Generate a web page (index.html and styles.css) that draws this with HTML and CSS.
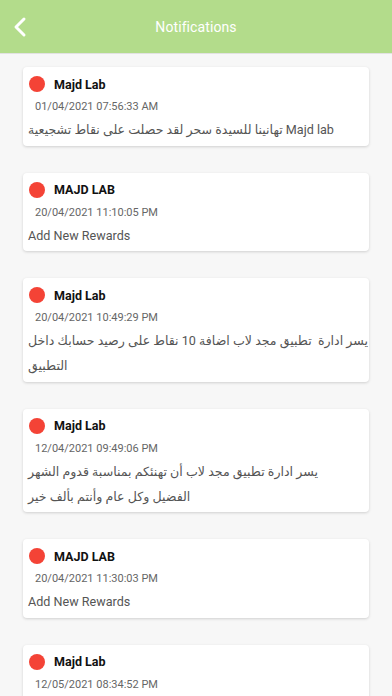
FILE: index.html
```html
<!DOCTYPE html>
<html>
<head>
<meta charset="utf-8">
<link rel="stylesheet" href="styles.css">
</head>
<body>
<header class="topbar">
  <svg class="back" width="14" height="22" viewBox="0 0 14 22"><path d="M11 3 L3 11 L11 19" fill="none" stroke="#fff" stroke-width="3" stroke-linecap="round" stroke-linejoin="round"/></svg>
  <div class="title">Notifications</div>
</header>
<main class="list">
  <div class="card">
    <div class="head"><span class="dot"></span><span class="name">Majd Lab</span></div>
    <div class="date">01/04/2021 07:56:33 AM</div>
    <div class="msg">تهانينا للسيدة سحر لقد حصلت على نقاط تشجيعية Majd lab</div>
  </div>
  <div class="card">
    <div class="head"><span class="dot"></span><span class="name">MAJD LAB</span></div>
    <div class="date">20/04/2021 11:10:05 PM</div>
    <div class="msg">Add New Rewards</div>
  </div>
  <div class="card">
    <div class="head"><span class="dot"></span><span class="name">Majd Lab</span></div>
    <div class="date">20/04/2021 10:49:29 PM</div>
    <div class="msg lines">يسر ادارة&nbsp; تطبيق مجد لاب اضافة 10 نقاط على رصيد حسابك داخل<br>التطبيق</div>
  </div>
  <div class="card">
    <div class="head"><span class="dot"></span><span class="name">Majd Lab</span></div>
    <div class="date">12/04/2021 09:49:06 PM</div>
    <div class="msg lines">يسر ادارة تطبيق مجد لاب أن تهنئكم بمناسبة قدوم الشهر<br>الفضيل وكل عام وأنتم بألف خير</div>
  </div>
  <div class="card">
    <div class="head"><span class="dot"></span><span class="name">MAJD LAB</span></div>
    <div class="date">20/04/2021 11:30:03 PM</div>
    <div class="msg">Add New Rewards</div>
  </div>
  <div class="card">
    <div class="head"><span class="dot"></span><span class="name">Majd Lab</span></div>
    <div class="date">12/05/2021 08:34:52 PM</div>
    <div class="msg">Add New Rewards</div>
  </div>
</main>
</body>
</html>
```
FILE: styles.css
```css
* { box-sizing: border-box; }
html, body { margin: 0; padding: 0; }
body {
  width: 392px;
  height: 696px;
  overflow: hidden;
  background: #f7f7f7;
  font-family: Roboto, "DejaVu Sans", sans-serif;
}
.topbar {
  position: relative;
  height: 54px;
  background: #b3dc8b;
  border-bottom: 1px solid #e2e2e2;
  display: flex;
  align-items: center;
  justify-content: center;
}
.back {
  position: absolute;
  left: 13px;
  top: 16px;
}
.title {
  color: #fff;
  font-size: 14px;
  letter-spacing: 0.1px;
  margin-top: 1px;
}
.list {
  padding: 13px 23px 0 23px;
  display: flex;
  flex-direction: column;
  gap: 27px;
}
.card {
  background: #fff;
  border-radius: 4px;
  box-shadow: 0 1px 3px rgba(0,0,0,0.16);
  padding: 9px 6px 3.5px 5px;
}
.head {
  display: flex;
  align-items: center;
  height: 16px;
  padding-left: 1px;
}
.dot {
  width: 16px;
  height: 16px;
  border-radius: 50%;
  background: #f44336;
  flex: none;
}
.name {
  margin-left: 9px;
  font-size: 12.5px;
  font-weight: bold;
  color: #111;
}
.date {
  margin-top: 6px;
  margin-left: 7px;
  line-height: 18px;
  font-size: 11px;
  color: #666;
}
.msg {
  margin-top: 1px;
  line-height: 25px;
  font-size: 12.6px;
  color: #555;
}
.msg.lines {
  white-space: nowrap;
}
```
